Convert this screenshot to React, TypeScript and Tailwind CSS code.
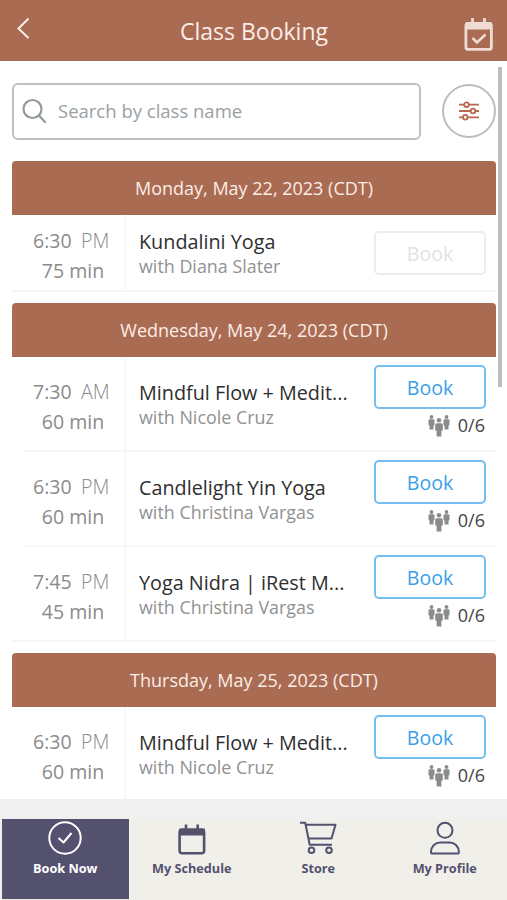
import clsx from 'clsx';

interface ClassItem {
  time: string;
  period: 'AM' | 'PM';
  duration: string;
  title: string;
  teacher: string;
  booked?: string;
}

interface ClassDay {
  date: string;
  items: ClassItem[];
}

const DAYS: ClassDay[] = [
  {
    date: 'Monday, May 22, 2023 (CDT)',
    items: [
      { time: '6:30', period: 'PM', duration: '75 min', title: 'Kundalini Yoga', teacher: 'Diana Slater' },
    ],
  },
  {
    date: 'Wednesday, May 24, 2023 (CDT)',
    items: [
      { time: '7:30', period: 'AM', duration: '60 min', title: 'Mindful Flow + Medit...', teacher: 'Nicole Cruz', booked: '0/6' },
      { time: '6:30', period: 'PM', duration: '60 min', title: 'Candlelight Yin Yoga', teacher: 'Christina Vargas', booked: '0/6' },
      { time: '7:45', period: 'PM', duration: '45 min', title: 'Yoga Nidra | iRest M...', teacher: 'Christina Vargas', booked: '0/6' },
    ],
  },
  {
    date: 'Thursday, May 25, 2023 (CDT)',
    items: [
      { time: '6:30', period: 'PM', duration: '60 min', title: 'Mindful Flow + Medit...', teacher: 'Nicole Cruz', booked: '0/6' },
    ],
  },
];

function PeopleIcon() {
  return (
    <svg width="22" height="22" viewBox="0 0 22 22" fill="#8b8b8b">
      <circle cx="3.5" cy="2" r="1.9" />
      <path d="M1.5 4.3h4q1 0 1 1v4.4q0 .8-1 .8v4h-4v-4q-1 0-1-.8V5.3q0-1 1-1z" />
      <circle cx="18.5" cy="2" r="1.9" />
      <path d="M16.5 4.3h4q1 0 1 1v4.4q0 .8-1 .8v4h-4v-4q-1 0-1-.8V5.3q0-1 1-1z" />
      <circle cx="11" cy="5.3" r="2.3" />
      <path d="M8.8 8.2h4.4q1.6 0 1.6 1.5v5.2q0 .8-1.400.8v5.900H8.600v-5.900q-1.400 0-1.400-.8V9.700q0-1.500 1.600-1.500z" />
    </svg>
  );
}

function ClassRow({ item, last }: { item: ClassItem; last: boolean }) {
  const open = Boolean(item.booked);

  return (
    <div className={clsx('relative flex', open ? 'h-[95px]' : 'h-[77px]')}>
      <div className={clsx('w-[114px] shrink-0 border-r-2 border-[#f8f8f8]', open ? 'pt-5' : 'pt-[11px]')}>
        <p className="flex h-[30px] items-center pl-[21px] text-[19.5px] text-[#8b8b8b]">
          <span className="w-12">{item.time}</span>
          <span className="font-light">{item.period}</span>
        </p>
        <p className="h-[30px] pl-[10px] text-center text-[19.5px] leading-[30px] text-[#8b8b8b]">{item.duration}</p>
      </div>
      <div className={clsx('flex-1 pl-[13px]', open ? 'pt-[22px]' : 'pt-[13px]')}>
        <p className="h-[27px] text-[19.8px] leading-[28px] whitespace-nowrap text-[#2e2e2e]">{item.title}</p>
        <p className="text-[17.9px] leading-[22px] whitespace-nowrap text-[#919191]">with {item.teacher}</p>
      </div>
      <div className={clsx('mr-[10px] flex w-[112px] shrink-0 flex-col', open ? 'pt-2' : 'pt-4')}>
        <button
          className={clsx(
            'h-11 shrink-0 rounded-[5px] border-2 pt-0.5 text-[19.6px] leading-none',
            open ? 'border-[#74bff0] text-[#3a9fe8]' : 'border-[#ededed] text-[#e2e2e2]',
          )}
        >
          Book
        </button>
        {open && (
          <div className="flex items-center justify-end gap-2 pt-1 pr-px text-[18px] leading-[25px] text-[#444]">
            <PeopleIcon />
            <span>{item.booked}</span>
          </div>
        )}
      </div>
      <div className={clsx('absolute right-0 bottom-0 h-0.5 bg-[#f6f6f6]', last ? 'left-0' : 'left-3')} />
    </div>
  );
}

function DaySection({ day }: { day: ClassDay }) {
  return (
    <section className="mb-[11px]">
      <h2 className="flex h-[54px] items-center justify-center rounded-t-[4px] bg-[#aa6b53] text-[18px] text-[#fcede7]">
        {day.date}
      </h2>
      {day.items.map((item, i) => (
        <ClassRow key={i} item={item} last={i === day.items.length - 1} />
      ))}
    </section>
  );
}

const NAV = [
  {
    label: 'Book Now',
    icon: (
      <>
        <circle cx="20" cy="19" r="15.7" />
        <path d="M13.5 19l5 4.500 8-9.500" />
      </>
    ),
  },
  {
    label: 'My Schedule',
    icon: (
      <>
        <rect x="7.600" y="10.800" width="24.500" height="23.500" rx="2.500" strokeWidth="2.600" />
        <path d="M8 10.500h24v5H8z" fill="currentColor" />
        <path d="M14 5.500v5M25.700 5.500v5" strokeWidth="2.600" />
      </>
    ),
  },
  {
    label: 'Store',
    icon: (
      <>
        <path d="M2 3.800h5.200l4.500 22H34M8 5.800h29.500L33.500 19.500H10.500" strokeWidth="2" />
        <circle cx="13.500" cy="31.300" r="2.800" />
        <circle cx="31" cy="31.300" r="2.800" />
      </>
    ),
  },
  {
    label: 'My Profile',
    icon: (
      <>
        <circle cx="20" cy="11.300" r="7.500" />
        <path d="M7.700 34.500h24.500q1.700 0 1.700-1.600c0-5.400-4-9.400-9.400-9.400h-9.200c-5.300 0-9.300 4-9.300 9.400q0 1.600 1.700 1.600z" />
      </>
    ),
  },
];

export default function App() {
  return (
    <div className="flex h-[900px] w-[507px] flex-col overflow-hidden bg-white font-['Open_Sans',sans-serif]">
      <header className="flex h-[61px] shrink-0 items-center justify-between bg-[#aa6b53] text-[#fcede7]">
        <svg width="40" height="61" fill="none" stroke="currentColor" strokeWidth="2">
          <path d="M28.500 18.500L18.500 28.500l10 9.500" />
        </svg>
        <h1 className="pt-0.5 pl-[15px] text-[23px]">Class Booking</h1>
        <svg width="54" height="61" fill="none" stroke="#efdcd5" strokeWidth="2.800">
          <rect x="12.900" y="23.400" width="25.500" height="26" rx="2.500" />
          <path d="M12.500 22.500h26.500v7H12.500z" fill="#efdcd5" stroke="none" />
          <path d="M19.500 18v6M31.500 18v6" />
          <path d="M19.500 38l4.500 4.500 8.500-8" strokeWidth="2.600" />
        </svg>
      </header>

      <main className="relative min-h-0 flex-1 overflow-hidden pr-[11px] pl-3">
        <div className="flex h-[100px] items-center justify-between">
          <div className="flex h-[57px] w-[409px] items-center rounded-[6px] border-2 border-[#bcc2c4] pl-2">
            <svg width="26" height="26" fill="none" stroke="#929a9e" strokeWidth="2.200">
              <circle cx="10.500" cy="11" r="9" />
              <path d="M17 17.500l6 6.500" strokeLinecap="round" />
            </svg>
            <span className="pb-px pl-[10px] text-[18.500px] font-medium text-[#99a0a4]">Search by class name</span>
          </div>
          <button className="flex size-[54px] items-center justify-center rounded-full border-2 border-[#babec0]">
            <svg width="22" height="22" fill="none" stroke="#b8694f" strokeWidth="1.800">
              <path d="M1 4.700h5M11 4.700h10M1 11h11.500M17.500 11H21M1 17.300h4M10 17.300h11" />
              <circle cx="8.500" cy="4.700" r="2.300" />
              <circle cx="15" cy="11" r="2.300" />
              <circle cx="7.300" cy="17.300" r="2.300" />
            </svg>
          </button>
        </div>
        {DAYS.map((day) => (
          <DaySection key={day.date} day={day} />
        ))}
        <div className="absolute top-1.5 right-[5px] h-[320px] w-1 bg-[#bdbdbd]" />
      </main>

      <footer className="h-[101px] shrink-0 bg-[#f1efea]">
        <div className="h-5 bg-[#f0f0f0]" />
        <nav className="flex h-20 pl-0.5">
          {NAV.map(({ label, icon }, i) => (
            <a
              key={label}
              className={clsx(
                'flex w-[126.500px] shrink-0 flex-col items-center font-bold',
                i === 0 ? 'bg-[#54516f] text-white' : 'text-[#54516f]',
              )}
            >
              <svg width="40" height="38" fill="none" stroke="currentColor" strokeWidth="2" strokeLinejoin="round">
                {icon}
              </svg>
              <span className="text-[12.700px] leading-[23px]">{label}</span>
            </a>
          ))}
        </nav>
      </footer>
    </div>
  );
}
